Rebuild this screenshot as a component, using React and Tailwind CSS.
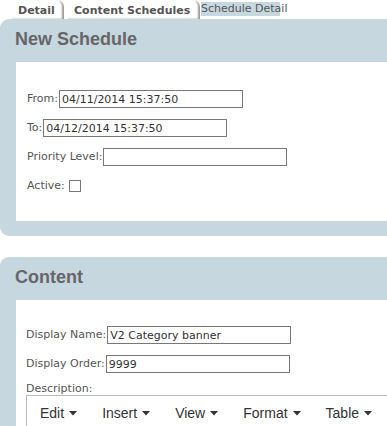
const font = { fontFamily: '"DejaVu Sans", Verdana, sans-serif' }

const Field = ({ label, value, width = 'w-[184px]' }) => (
  <div className="flex items-center h-[18px] mb-[11px]">
    <span className="text-[11px] text-[#555] pr-[1px]">{label}</span>
    <input
      readOnly
      value={value}
      className={`${width} h-[18px] border border-[#777] px-[2px] text-[11px] text-[#333] outline-none`}
      style={font}
    />
  </div>
)

const Panel = ({ title, children, className = '' }) => (
  <div className={`bg-[#c6d7e0] rounded-l-[9px] pb-[15px] ${className}`}>
    <div className="h-[43px] flex items-center pl-[15px] pb-[3px]">
      <h2 className="text-[18px] font-bold text-[#666]" style={{ fontFamily: '"Liberation Sans", Arial, sans-serif' }}>
        {title}
      </h2>
    </div>
    <div className="ml-[16px] bg-white">{children}</div>
  </div>
)

const Tab = ({ children, className = '' }) => (
  <div className={`h-[19px] bg-white rounded-tr-[7px] shadow-[inset_-3px_-1px_2px_-1px_#9a9a9a] flex items-center text-[11px] font-bold text-[#555] ${className}`}>
    {children}
  </div>
)

const MenuItem = ({ label, className = '' }) => (
  <div className={`flex items-center gap-[5px] text-[14px] text-[#333] ${className}`} style={{ fontFamily: '"Liberation Sans", Arial, sans-serif' }}>
    {label}
    <svg width="8" height="5" viewBox="0 0 8 5"><path d="M0 0h8L4 4.5z" fill="#333" /></svg>
  </div>
)

export default function App() {
  return (
    <div className="w-[387px] h-[426px] overflow-hidden bg-white" style={font}>
      <div className="flex items-end h-[19px]">
        <Tab className="ml-[12px] w-[52px] pl-[6px] pt-[3px]">Detail</Tab>
        <Tab className="ml-[4px] w-[132px] pl-[6px] pt-[3px]">Content Schedules</Tab>
        <div className="self-start mt-[2px] ml-[1px] h-[14px] w-[79px] bg-[#c6d7e0] text-[11px] leading-[14px] text-[#555] whitespace-nowrap">
          Schedule Detail
        </div>
      </div>

      <Panel title="New Schedule">
        <div className="pt-[28px] pl-[11px] pb-[26px]">
          <Field label="From:" value="04/11/2014 15:37:50" />
          <Field label="To:" value="04/12/2014 15:37:50" />
          <Field label="Priority Level:" value="" />
          <div className="flex items-center h-[18px] mt-[2px]">
            <span className="text-[11px] text-[#555] mr-[4px]">Active:</span>
            <span className="w-[12px] h-[12px] border border-[#777] bg-white" />
          </div>
        </div>
      </Panel>

      <Panel title="Content" className="mt-[21px]">
        <div className="pt-[26px] pl-[10px] h-[200px]">
          <Field label="Display Name:" value="V2 Category banner" />
          <Field label="Display Order:" value="9999" />
          <div className="text-[11px] text-[#555] leading-[13px] mt-[-2px]">Description:</div>
          <div className="border border-[#bbb] border-r-0 h-[60px] flex items-start pt-[7px]">
            <MenuItem label="Edit" className="ml-[13px]" />
            <MenuItem label="Insert" className="ml-[25px]" />
            <MenuItem label="View" className="ml-[25px]" />
            <MenuItem label="Format" className="ml-[25px]" />
            <MenuItem label="Table" className="ml-[25px]" />
          </div>
        </div>
      </Panel>
    </div>
  )
}
